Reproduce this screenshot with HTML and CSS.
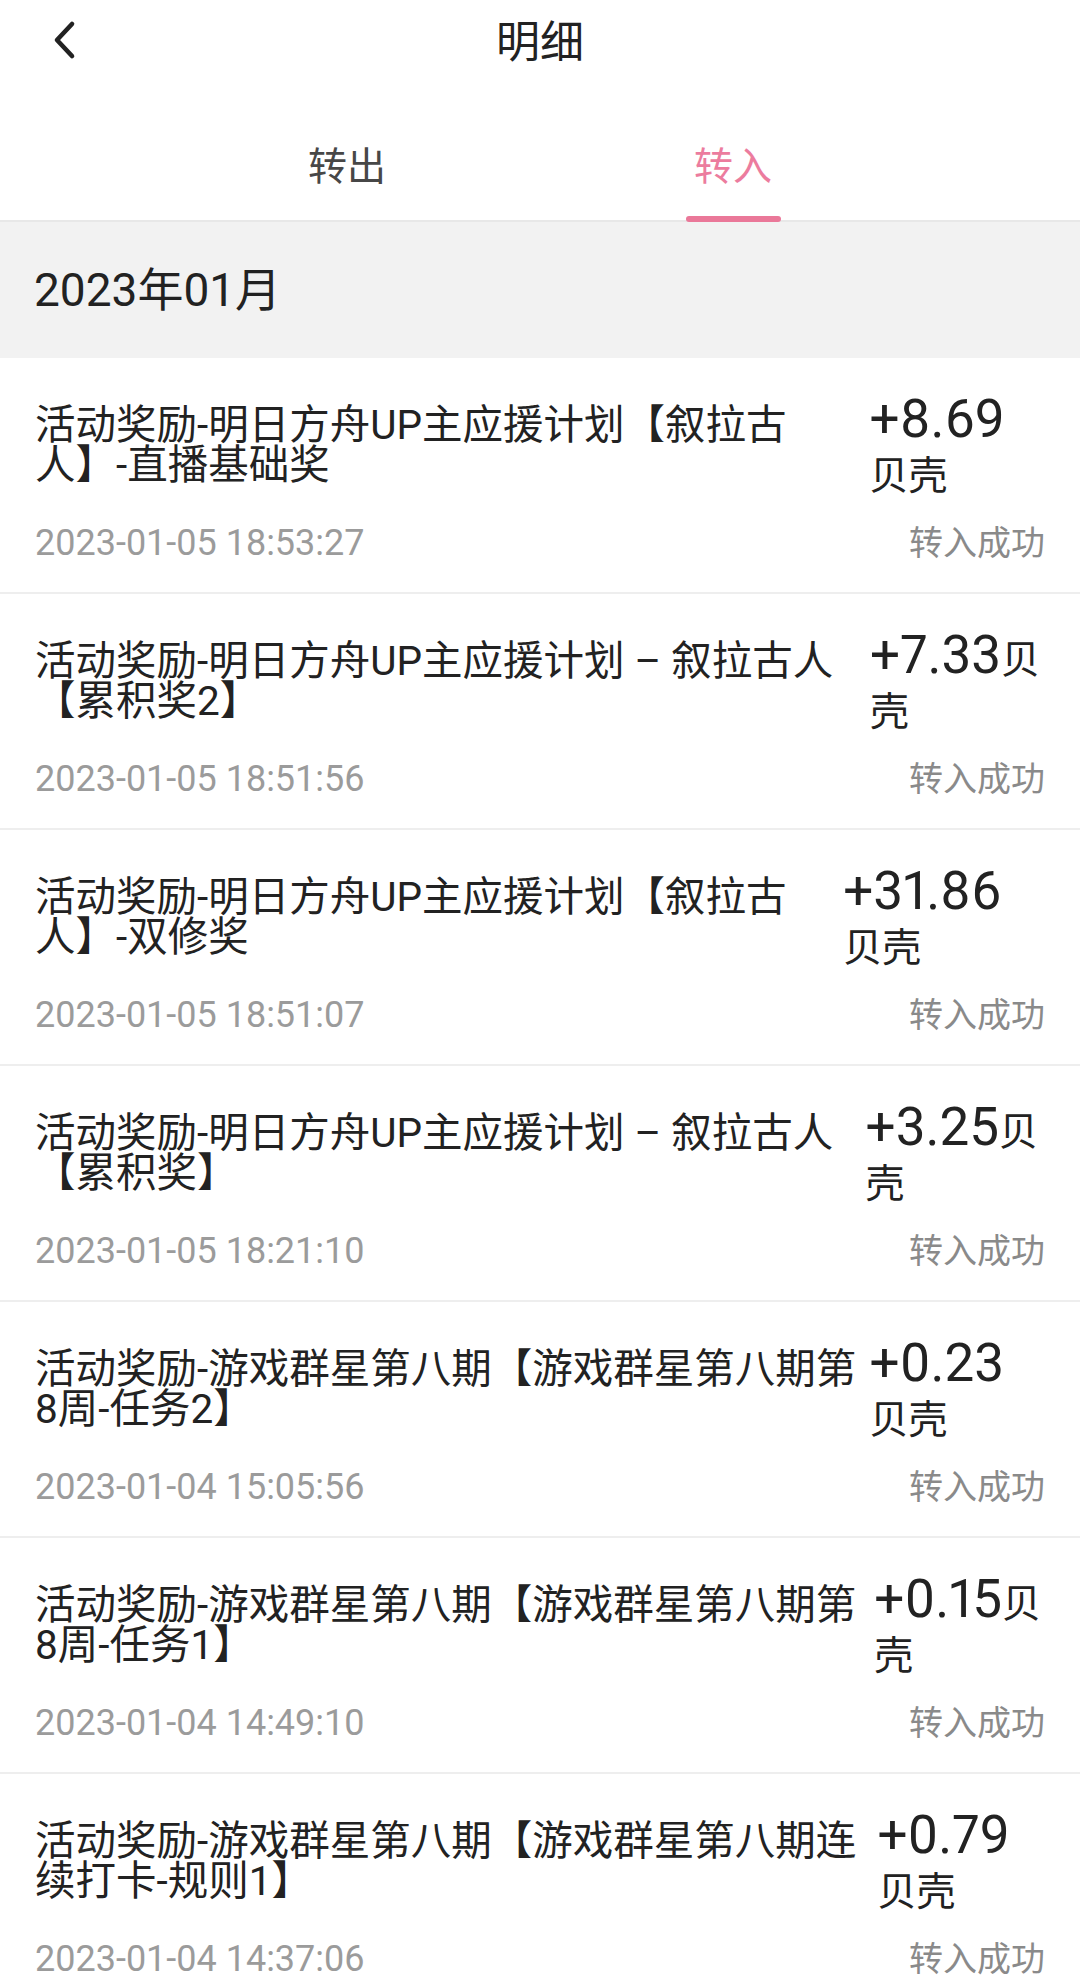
FILE: index.html
```html
<!DOCTYPE html>
<html lang="zh-CN">
<head>
<meta charset="utf-8">
<title>明细</title>
<link rel="stylesheet" href="styles.css">
</head>
<body>
<div class="app">
  <header class="topbar">
    <div class="topbar-left">
      <svg class="back" width="40" height="50" viewBox="0 0 40 50" aria-hidden="true">
        <polyline points="32,7 17,23 32,39" fill="none" stroke="#222" stroke-width="4.6" stroke-linecap="round" stroke-linejoin="round"/>
      </svg>
    </div>
    <h1 class="topbar-title">明细</h1>
    <div class="topbar-right"></div>
  </header>

  <nav class="tabs">
    <div class="tab"><span class="tab-label">转出</span></div>
    <div class="tab active"><span class="tab-label">转入</span><span class="tab-bar"></span></div>
  </nav>

  <div class="month">2023年01月</div>

  <ul class="list">
    <li class="row">
      <div class="row-top">
        <div class="title">活动奖励-明日方舟UP主应援计划【叙拉古人】-直播基础奖</div>
        <div class="amount"><span class="num">+8.69</span><span class="unit keep">贝壳</span></div>
      </div>
      <div class="row-bottom"><span class="time">2023-01-05 18:53:27</span><span class="status">转入成功</span></div>
    </li>
    <li class="row">
      <div class="row-top">
        <div class="title">活动奖励-明日方舟UP主应援计划 – 叙拉古人【累积奖2】</div>
        <div class="amount"><span class="num">+7.33</span><span class="unit">贝</span><span class="unit">壳</span></div>
      </div>
      <div class="row-bottom"><span class="time">2023-01-05 18:51:56</span><span class="status">转入成功</span></div>
    </li>
    <li class="row">
      <div class="row-top">
        <div class="title">活动奖励-明日方舟UP主应援计划【叙拉古人】-双修奖</div>
        <div class="amount"><span class="num">+31.86</span><span class="unit keep">贝壳</span></div>
      </div>
      <div class="row-bottom"><span class="time">2023-01-05 18:51:07</span><span class="status">转入成功</span></div>
    </li>
    <li class="row">
      <div class="row-top">
        <div class="title">活动奖励-明日方舟UP主应援计划 – 叙拉古人【累积奖】</div>
        <div class="amount"><span class="num">+3.25</span><span class="unit">贝</span><span class="unit">壳</span></div>
      </div>
      <div class="row-bottom"><span class="time">2023-01-05 18:21:10</span><span class="status">转入成功</span></div>
    </li>
    <li class="row">
      <div class="row-top">
        <div class="title">活动奖励-游戏群星第八期【游戏群星第八期第8周-任务2】</div>
        <div class="amount"><span class="num">+0.23</span><span class="unit keep">贝壳</span></div>
      </div>
      <div class="row-bottom"><span class="time">2023-01-04 15:05:56</span><span class="status">转入成功</span></div>
    </li>
    <li class="row">
      <div class="row-top">
        <div class="title">活动奖励-游戏群星第八期【游戏群星第八期第8周-任务1】</div>
        <div class="amount"><span class="num">+0.15</span><span class="unit">贝</span><span class="unit">壳</span></div>
      </div>
      <div class="row-bottom"><span class="time">2023-01-04 14:49:10</span><span class="status">转入成功</span></div>
    </li>
    <li class="row">
      <div class="row-top">
        <div class="title">活动奖励-游戏群星第八期【游戏群星第八期连续打卡-规则1】</div>
        <div class="amount"><span class="num">+0.79</span><span class="unit keep">贝壳</span></div>
      </div>
      <div class="row-bottom"><span class="time">2023-01-04 14:37:06</span><span class="status">转入成功</span></div>
    </li>
  </ul>
</div>
</body>
</html>
```
FILE: styles.css
```css
html, body {
  margin: 0;
  padding: 0;
  overflow: hidden;
  background: #ffffff;
}

body {
  font-family: Roboto, "Noto Sans CJK SC", sans-serif;
  color: #222222;
}

.app {
  width: 1080px;
}

/* ---------- top bar ---------- */
.topbar {
  display: grid;
  grid-template-columns: 1fr auto 1fr;
  height: 84px;
  box-sizing: border-box;
  padding-top: 2px;
}

.topbar-left {
  padding-left: 40px;
  padding-top: 15px;
}

.back {
  display: block;
}

.topbar-title {
  margin: 0;
  font-size: 44px;
  font-weight: 400;
  line-height: 82px;
  color: #222222;
}

/* ---------- tabs ---------- */
.tabs {
  display: flex;
  justify-content: center;
  height: 136px;
  border-bottom: 2px solid #e8e8e8;
}

.tab {
  width: 386px;
  display: flex;
  flex-direction: column;
  align-items: center;
  justify-content: space-between;
  box-sizing: border-box;
  padding-top: 58px;
}

.tab-label {
  font-size: 39px;
  line-height: 50px;
  color: #474747;
}

.tab.active .tab-label {
  color: #ec7c9e;
}

.tab-bar {
  width: 95px;
  height: 6px;
  border-radius: 3px;
  background: #ea7899;
  margin-bottom: -2px;
}

/* ---------- month band ---------- */
.month {
  height: 136px;
  box-sizing: border-box;
  padding: 43px 0 0 34px;
  background: #f2f2f2;
  font-size: 46px;
  line-height: 50px;
  color: #222222;
}

/* ---------- list ---------- */
.list {
  list-style: none;
  margin: 0;
  padding: 0;
}

.row {
  padding: 35px 35px 27px;
  border-bottom: 2px solid #eeeeee;
}

.row-top {
  display: flex;
  align-items: flex-start;
}

.title {
  flex: 1 1 auto;
  min-width: 0;
  margin-top: 12px;
  font-size: 40.5px;
  line-height: 40px;
  color: #222222;
}

.amount {
  flex: 0 0.85 auto;
  margin-left: 8px;
  font-size: 53px;
  line-height: 52px;
  font-variant-numeric: proportional-nums;
  color: #222222;
}

.unit {
  font-size: 39px;
  line-height: 1;
}

.unit.keep {
  display: inline-block;
}

.row-bottom {
  margin-top: 24px;
  display: flex;
  justify-content: space-between;
  align-items: baseline;
  line-height: 44px;
}

.time {
  font-size: 36px;
  color: #9b9b9b;
}

.status {
  font-size: 34px;
  color: #8a8a8a;
}
```
